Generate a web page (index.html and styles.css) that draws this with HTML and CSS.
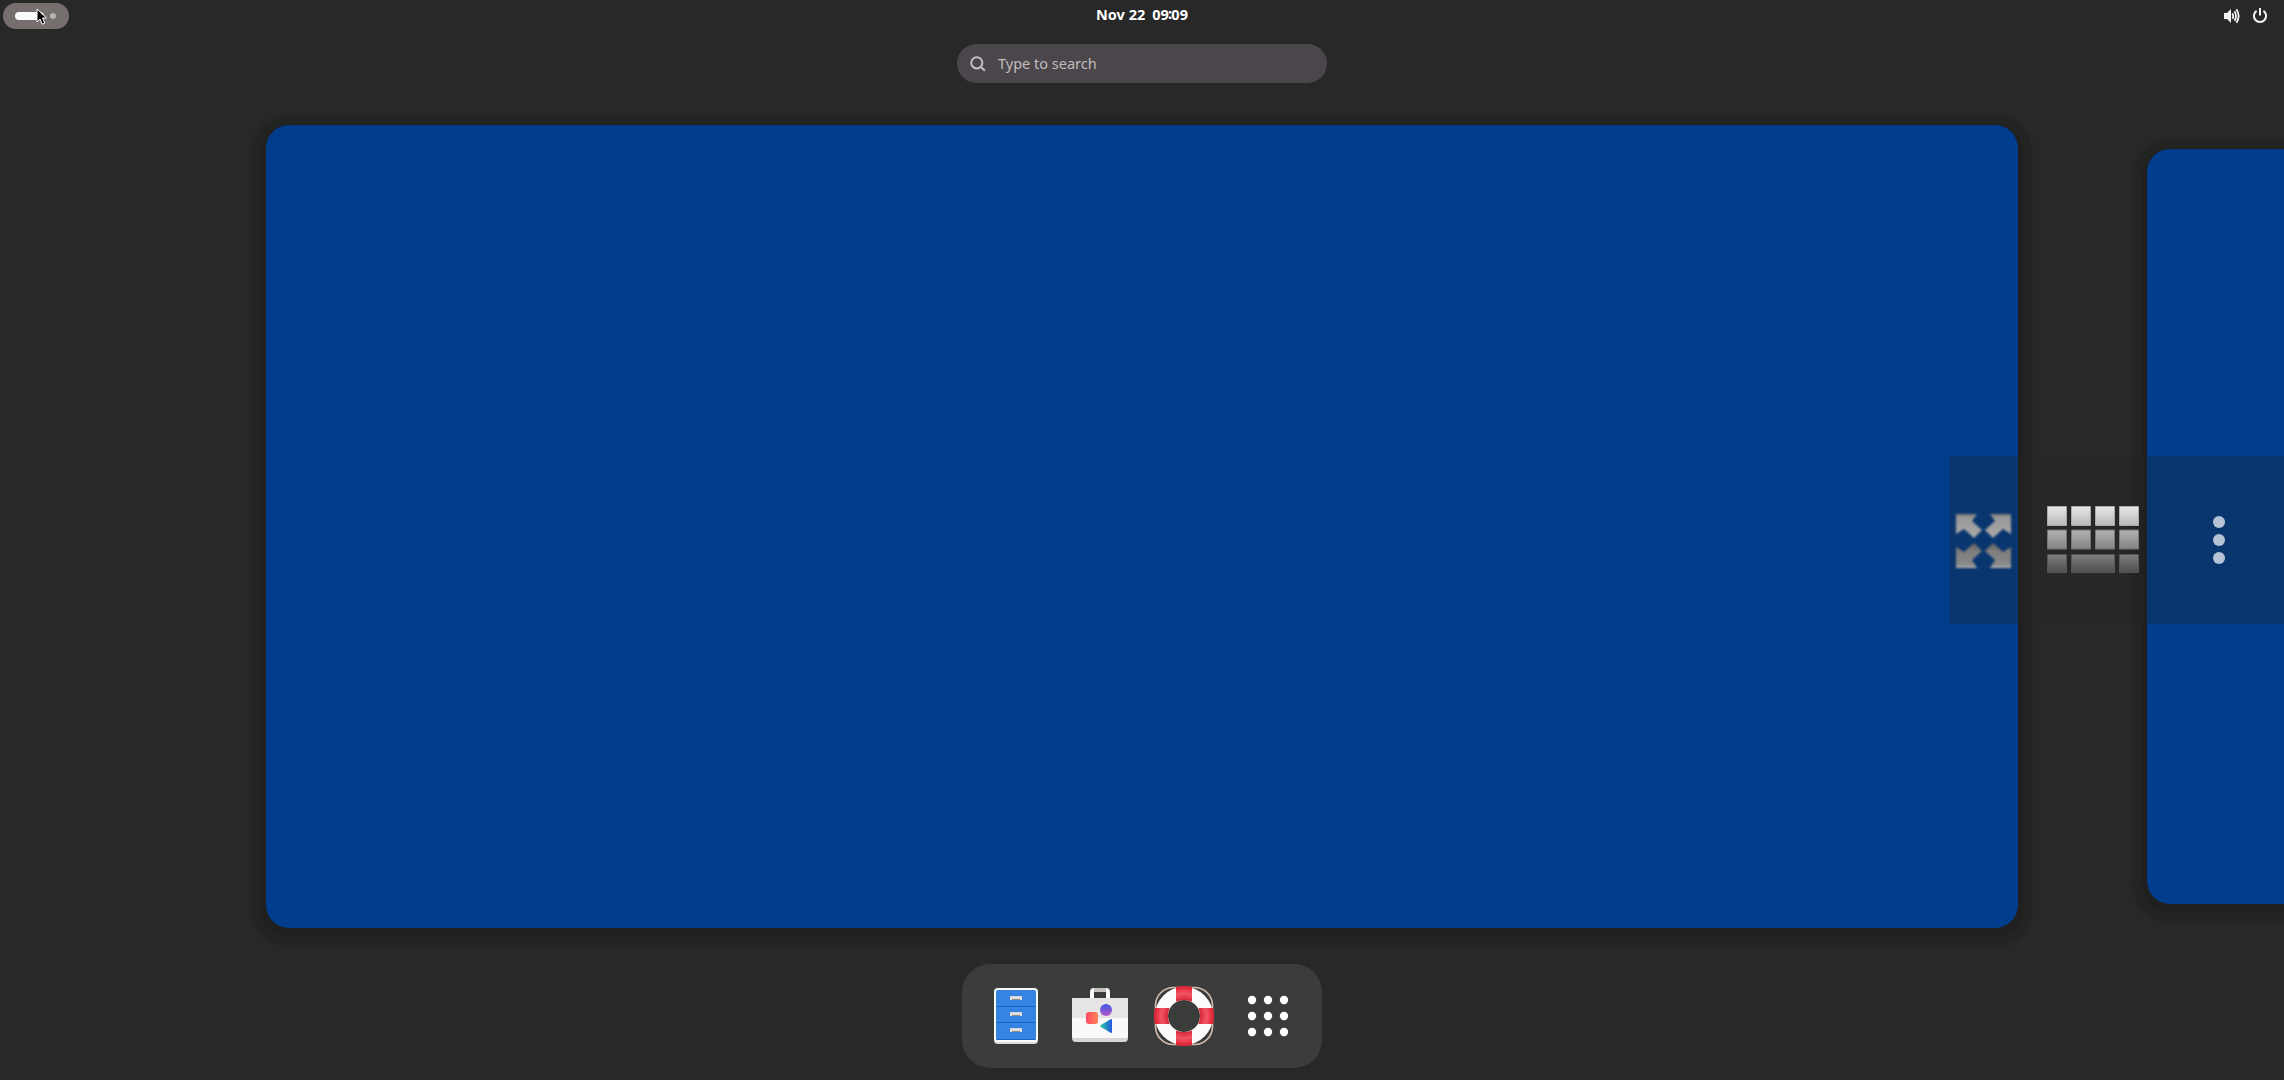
FILE: index.html
```html
<!DOCTYPE html>
<html lang="en">
<head>
<meta charset="utf-8">
<title>Activities overview</title>
<link rel="stylesheet" href="styles.css">
</head>
<body>
<div class="desktop">
  <header class="panel">
    <div class="panel-start">
      <button class="activities" aria-label="Activities"><span class="current"></span><span class="other"></span></button>
    </div>
    <div class="clock"><span>Nov 22</span><span class="time">09<span class="colon">:</span>09</span></div>
    <div class="status">
      <svg width="16" height="16" viewBox="0 0 16 16" fill="none" stroke="#f4f4f4" stroke-width="1.8"><path d="M0 5h3l4-4v14l-4-4H0z" fill="#f4f4f4" stroke="none"/><path d="M8.3 5.2q1.8 2.8 0 5.600M10.500 3.200q3 4.800 0 9.600M12.400 1.200q4.500 6.800 0 13.600"/></svg>
      <svg width="16" height="16" viewBox="0 0 16 16" fill="none" stroke="#f4f4f4" stroke-width="2"><path d="M4.600 2.900a6.100 6.100 0 1 0 6.800 0M8 0v7.500"/></svg>
    </div>
  </header>

  <div class="search">
    <svg width="16" height="16" viewBox="0 0 16 16" fill="none" stroke="#c3c1c2" stroke-width="2"><circle cx="6.800" cy="6.800" r="5.600"/><path d="M10.800 10.800l4 4"/></svg>
    <span>Type to search</span>
  </div>

  <main class="workspaces">
    <div class="workspace"></div>
    <div class="workspace next"></div>
  </main>

  <nav class="dock">
    <svg width="64" height="64" viewBox="0 0 64 64">
      <rect x="10" y="6" width="44" height="54" rx="4" fill="#deddda"/>
      <rect x="10" y="4" width="44" height="54" rx="4" fill="#fafafa"/>
      <rect x="12" y="6" width="40" height="50" rx="2" fill="#3584e4"/>
      <path d="M12 22.500h40M12 38.500h40M12.500 55.500h39" stroke="#1b67bd"/>
      <path d="M26 12h12v4H26zM26 28h12v4H26zM26 44h12v4H26z" fill="#8b8b8b"/>
      <path d="M26 12h12v4h-2v-1h-8v1h-2zM26 28h12v4h-2v-1h-8v1h-2zM26 44h12v4h-2v-1h-8v1h-2z" fill="#dedbd7"/>
    </svg>
    <svg width="64" height="64" viewBox="-2 0 64 64">
      <defs>
        <linearGradient id="square"><stop stop-color="#ff4968"/><stop offset="1" stop-color="#ff8253"/></linearGradient>
        <linearGradient id="ball" x2="0" y2="1"><stop stop-color="#3e56e8"/><stop offset="1" stop-color="#b55ac9"/></linearGradient>
        <linearGradient id="play"><stop stop-color="#26d0a0"/><stop offset="1" stop-color="#2457dd"/></linearGradient>
      </defs>
      <path d="M22 15V8q0-2 2-2h12q2 0 2 2v7" fill="none" stroke="#fafafa" stroke-width="4"/>
      <path d="M24 4h12v4H24z" fill="#c5c1bd"/>
      <path d="M2 14h56v40q0 4-4 4H6q-4 0-4-4z" fill="#d7d7d7"/>
      <path d="M2 14h56v38q0 2-2 2H4q-2 0-2-2z" fill="#fafafa"/>
      <path d="M2 14h56v20H2z" fill="#e6e5e4"/>
      <rect x="16" y="28" width="12" height="12" rx="3" fill="url(#square)"/>
      <circle cx="36" cy="26" r="6" fill="url(#ball)"/>
      <path d="M40.500 35.200q1.500-.7 1.500 1v11.600q0 1.700-1.500 1L30.800 43q-1.600-1 0-2z" fill="url(#play)"/>
    </svg>
    <svg width="64" height="64" viewBox="0 0 64 64">
      <defs>
        <radialGradient id="red" gradientUnits="userSpaceOnUse" cx="32" cy="32" r="30"><stop offset=".54" stop-color="#d82838"/><stop offset=".75" stop-color="#f35561"/><stop offset="1" stop-color="#dd1c2e"/></radialGradient>
      </defs>
      <rect x="3.500" y="3.500" width="57" height="57" rx="18" fill="none" stroke="#d5c0b0" stroke-width="1.600"/>
      <circle cx="32" cy="32" r="22.500" fill="none" stroke="#fbfbfb" stroke-width="13"/>
      <path d="M24 3q8-2 16 0v14.500q-8-3-16 0zM24 46.500q8 3 16 0v14.500q-8 2-16 0zM3 24h14.500q-3 8 0 16H3q-2-8 0-16zM46.500 24H61q2 8 0 16H46.500q3-8 0-16z" fill="url(#red)"/>
    </svg>
    <svg width="64" height="64" viewBox="0 0 64 64" fill="#fff">
      <circle cx="16" cy="16" r="4.200"/><circle cx="32" cy="16" r="4.200"/><circle cx="48" cy="16" r="4.200"/>
      <circle cx="16" cy="32" r="4.200"/><circle cx="32" cy="32" r="4.200"/><circle cx="48" cy="32" r="4.200"/>
      <circle cx="16" cy="48" r="4.200"/><circle cx="32" cy="48" r="4.200"/><circle cx="48" cy="48" r="4.200"/>
    </svg>
  </nav>

  <aside class="viewer-controls">
    <svg width="335" height="168" viewBox="0 0 335 168">
      <defs>
        <linearGradient id="up" x2="0" y2="1"><stop stop-color="#777"/><stop offset=".15" stop-color="#989898"/><stop offset="1" stop-color="#aaa"/></linearGradient>
        <linearGradient id="down" x2="0" y2="1"><stop stop-color="#5e5e5e"/><stop offset=".3" stop-color="#7d7d7d"/><stop offset=".88" stop-color="#8a8a8a"/><stop offset="1" stop-color="#b9b9b9"/></linearGradient>
        <linearGradient id="row1" x2="0" y2="1"><stop stop-color="#e8e8e8"/><stop offset="1" stop-color="#b8b8b8"/></linearGradient>
        <linearGradient id="row2" x2="0" y2="1"><stop stop-color="#b2b2b2"/><stop offset="1" stop-color="#828282"/></linearGradient>
        <linearGradient id="row3" x2="0" y2="1"><stop stop-color="#7e7e7e"/><stop offset="1" stop-color="#4e4e4e"/></linearGradient>
      </defs>
      <g class="arrows">
        <path fill="url(#up)" d="M7 58h21l-5 7 10 9-8 8-10-9-8 5z"/>
        <path fill="url(#up)" d="M62 58H41l5 7-10 9 8 8 10-9 8 5z"/>
        <path fill="url(#down)" d="M7 112h21l-5-8 10-9-8-8-10 9-8-5z"/>
        <path fill="url(#down)" d="M62 112H41l5-8-10-9 8-8 10 9 8-5z"/>
      </g>
      <path fill="url(#row1)" stroke="#aaa" d="M98.500 50.500h19v19h-19zM122.500 50.500h19v19h-19zM146.500 50.500h19v19h-19zM170.500 50.500h19v19h-19z"/>
      <path fill="url(#row2)" stroke="#777" d="M98.500 74h19v19h-19zM122.500 74h19v19h-19zM146.500 74h19v19h-19zM170.500 74h19v19h-19z"/>
      <path fill="url(#row3)" stroke="#555" d="M98.500 98.500h19v18h-19zM122.500 98.500h43v18h-43zM170.500 98.500h19v18h-19z"/>
      <g fill="#b6c3d6"><circle cx="270" cy="66" r="6"/><circle cx="270" cy="84" r="6"/><circle cx="270" cy="102" r="6"/></g>
    </svg>
  </aside>

  <svg class="pointer" width="12" height="18" viewBox="0 0 12 18"><path d="M1 1v13l3-3 2.200 5.200 2.600-1.100L6.600 10H10.500z" fill="#000" stroke="#fff" stroke-width="1"/></svg>
</div>
</body>
</html>
```
FILE: styles.css
```css
* { box-sizing: border-box; }
body { margin: 0; background: #282828; font-family: "Noto Sans", sans-serif; }
svg { display: block; flex: none; }
.desktop {
  position: relative;
  width: 2284px;
  height: 1080px;
  overflow: hidden;
  display: flex;
  flex-direction: column;
  align-items: center;
}
.panel {
  width: 100%;
  height: 32px;
  display: grid;
  grid-template-columns: 1fr auto 1fr;
}
.panel-start { padding: 3px; }
.activities {
  width: 66px;
  height: 26px;
  padding: 0 13px 0 12px;
  border: 0;
  border-radius: 13px;
  background: #76706e;
  display: flex;
  align-items: center;
  justify-content: space-between;
}
.current { width: 29px; height: 8px; border-radius: 4px; background: #fafafa; }
.other { width: 6px; height: 6px; border-radius: 50%; background: #b7b3b4; }
.clock {
  display: flex;
  gap: 7px;
  color: #fff;
  font-size: 14.5px;
  font-weight: 700;
  line-height: 28px;
}
.colon { position: relative; top: -1px; margin: 0 -.8px; }
.status {
  display: flex;
  justify-content: flex-end;
  gap: 12px;
  padding: 8px 16px 0 0;
}
.search {
  width: 370px;
  height: 39px;
  margin-top: 12px;
  padding-left: 13px;
  border-radius: 20px;
  background: #4b464b;
  color: #c0bdbc;
  display: flex;
  align-items: center;
  gap: 12px;
  font-size: 14.5px;
}
.search span { padding-bottom: 2px; }
.workspaces {
  width: 100%;
  height: 803px;
  margin-top: 42px;
  padding-left: 266px;
  display: flex;
  align-items: center;
  gap: 129px;
}
.workspace {
  flex: none;
  width: 1752px;
  height: 803px;
  border-radius: 23px;
  background: #003d8c;
  box-shadow: 0 4px 0 5px #202020, 0 4px 0 14px #222421, 0 4px 0 17px #29262a;
}
.next { height: 755px; }
.dock {
  width: 360px;
  height: 104px;
  margin-top: 36px;
  padding: 20px 22px;
  border-radius: 28px;
  background: #3b3d3a;
  display: flex;
  gap: 20px;
}
.viewer-controls {
  position: absolute;
  right: 0;
  top: 456px;
  background: rgba(38, 38, 38, .27);
}
.arrows { filter: blur(.8px); }
.pointer { position: absolute; left: 36px; top: 8px; }
```
